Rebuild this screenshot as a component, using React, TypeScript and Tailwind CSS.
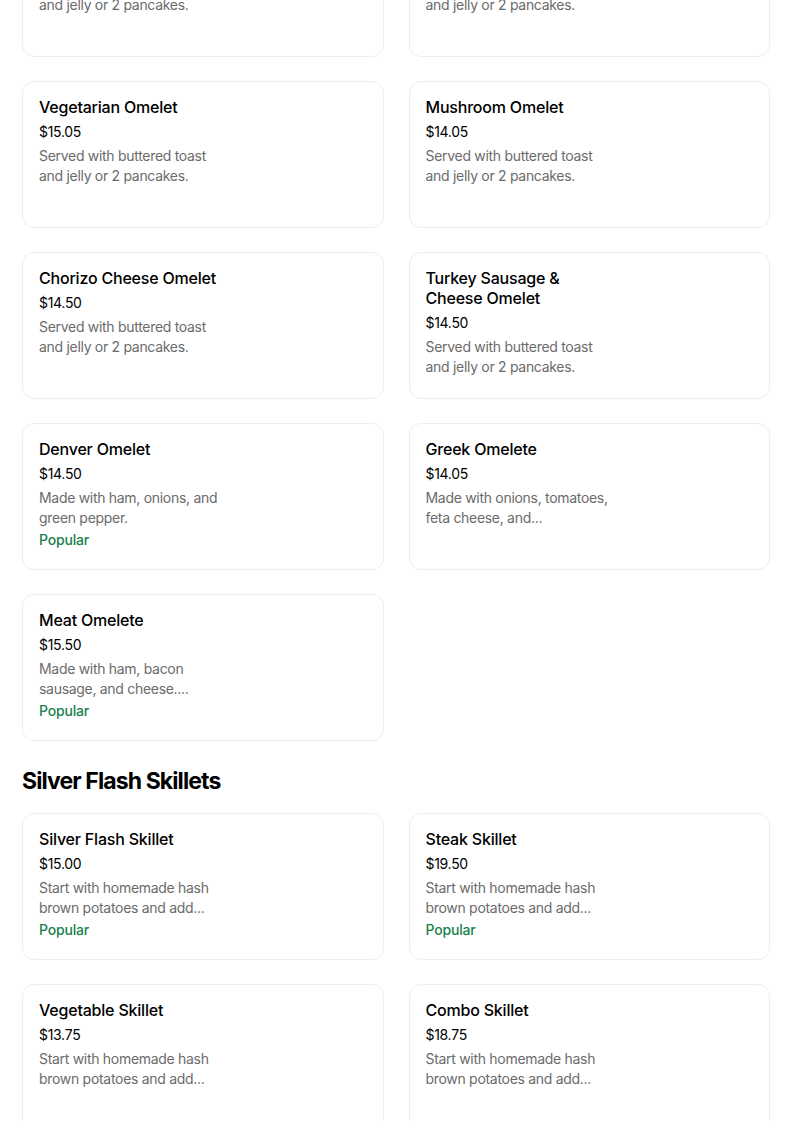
import React from "react";

type Item = { name: string; price: string; desc: string; popular?: boolean };

const omelets: Item[] = [
  { name: "Ham & Cheese Omelet", price: "$14.50", desc: "Served with buttered toast and jelly or 2 pancakes." },
  { name: "Bacon & Cheese Omelet", price: "$14.50", desc: "Served with buttered toast and jelly or 2 pancakes." },
  { name: "Vegetarian Omelet", price: "$15.05", desc: "Served with buttered toast and jelly or 2 pancakes." },
  { name: "Mushroom Omelet", price: "$14.05", desc: "Served with buttered toast and jelly or 2 pancakes." },
  { name: "Chorizo Cheese Omelet", price: "$14.50", desc: "Served with buttered toast and jelly or 2 pancakes." },
  { name: "Turkey Sausage & Cheese Omelet", price: "$14.50", desc: "Served with buttered toast and jelly or 2 pancakes." },
  { name: "Denver Omelet", price: "$14.50", desc: "Made with ham, onions, and green pepper.", popular: true },
  { name: "Greek Omelete", price: "$14.05", desc: "Made with onions, tomatoes, feta cheese, and..." },
  { name: "Meat Omelete", price: "$15.50", desc: "Made with ham, bacon sausage, and cheese....", popular: true },
];

const skillets: Item[] = [
  { name: "Silver Flash Skillet", price: "$15.00", desc: "Start with homemade hash brown potatoes and add...", popular: true },
  { name: "Steak Skillet", price: "$19.50", desc: "Start with homemade hash brown potatoes and add...", popular: true },
  { name: "Vegetable Skillet", price: "$13.75", desc: "Start with homemade hash brown potatoes and add..." },
  { name: "Combo Skillet", price: "$18.75", desc: "Start with homemade hash brown potatoes and add..." },
];

function Card({ item }: { item: Item }) {
  return (
    <div className="h-[147px] rounded-xl border border-[#eeeeee] bg-white px-4 pt-[15px]">
      <div className="w-[190px]">
        <div className="text-[16px] font-medium leading-5 tracking-[-0.2px] text-black">{item.name}</div>
        <div className="mt-[5px] text-[14px] leading-5 tracking-[-0.3px] text-black">{item.price}</div>
        <div className="mt-1 line-clamp-2 h-10 text-[14px] leading-5 tracking-[-0.3px] text-[#6b6b6b]">
          {item.desc}
        </div>
        {item.popular && (
          <div className="mt-[2px] text-[14px] font-medium leading-5 tracking-[-0.2px] text-[#1a7f4b]">Popular</div>
        )}
      </div>
    </div>
  );
}

export default function App() {
  return (
    <div
      className="h-[1121px] overflow-hidden bg-white pl-[22px] pr-[34px]"
      style={{ fontFamily: "Inter, 'Noto Sans', sans-serif" }}
    >
      <div className="mt-[-90px] grid grid-cols-2 gap-x-[25px] gap-y-6">
        {omelets.map((it) => (
          <Card key={it.name} item={it} />
        ))}
      </div>
      <h2 className="mt-[24px] mb-[16px] text-[23px] font-bold leading-8 tracking-[-0.9px] text-black">
        Silver Flash Skillets
      </h2>
      <div className="grid grid-cols-2 gap-x-[25px] gap-y-6">
        {skillets.map((it) => (
          <Card key={it.name} item={it} />
        ))}
      </div>
    </div>
  );
}
